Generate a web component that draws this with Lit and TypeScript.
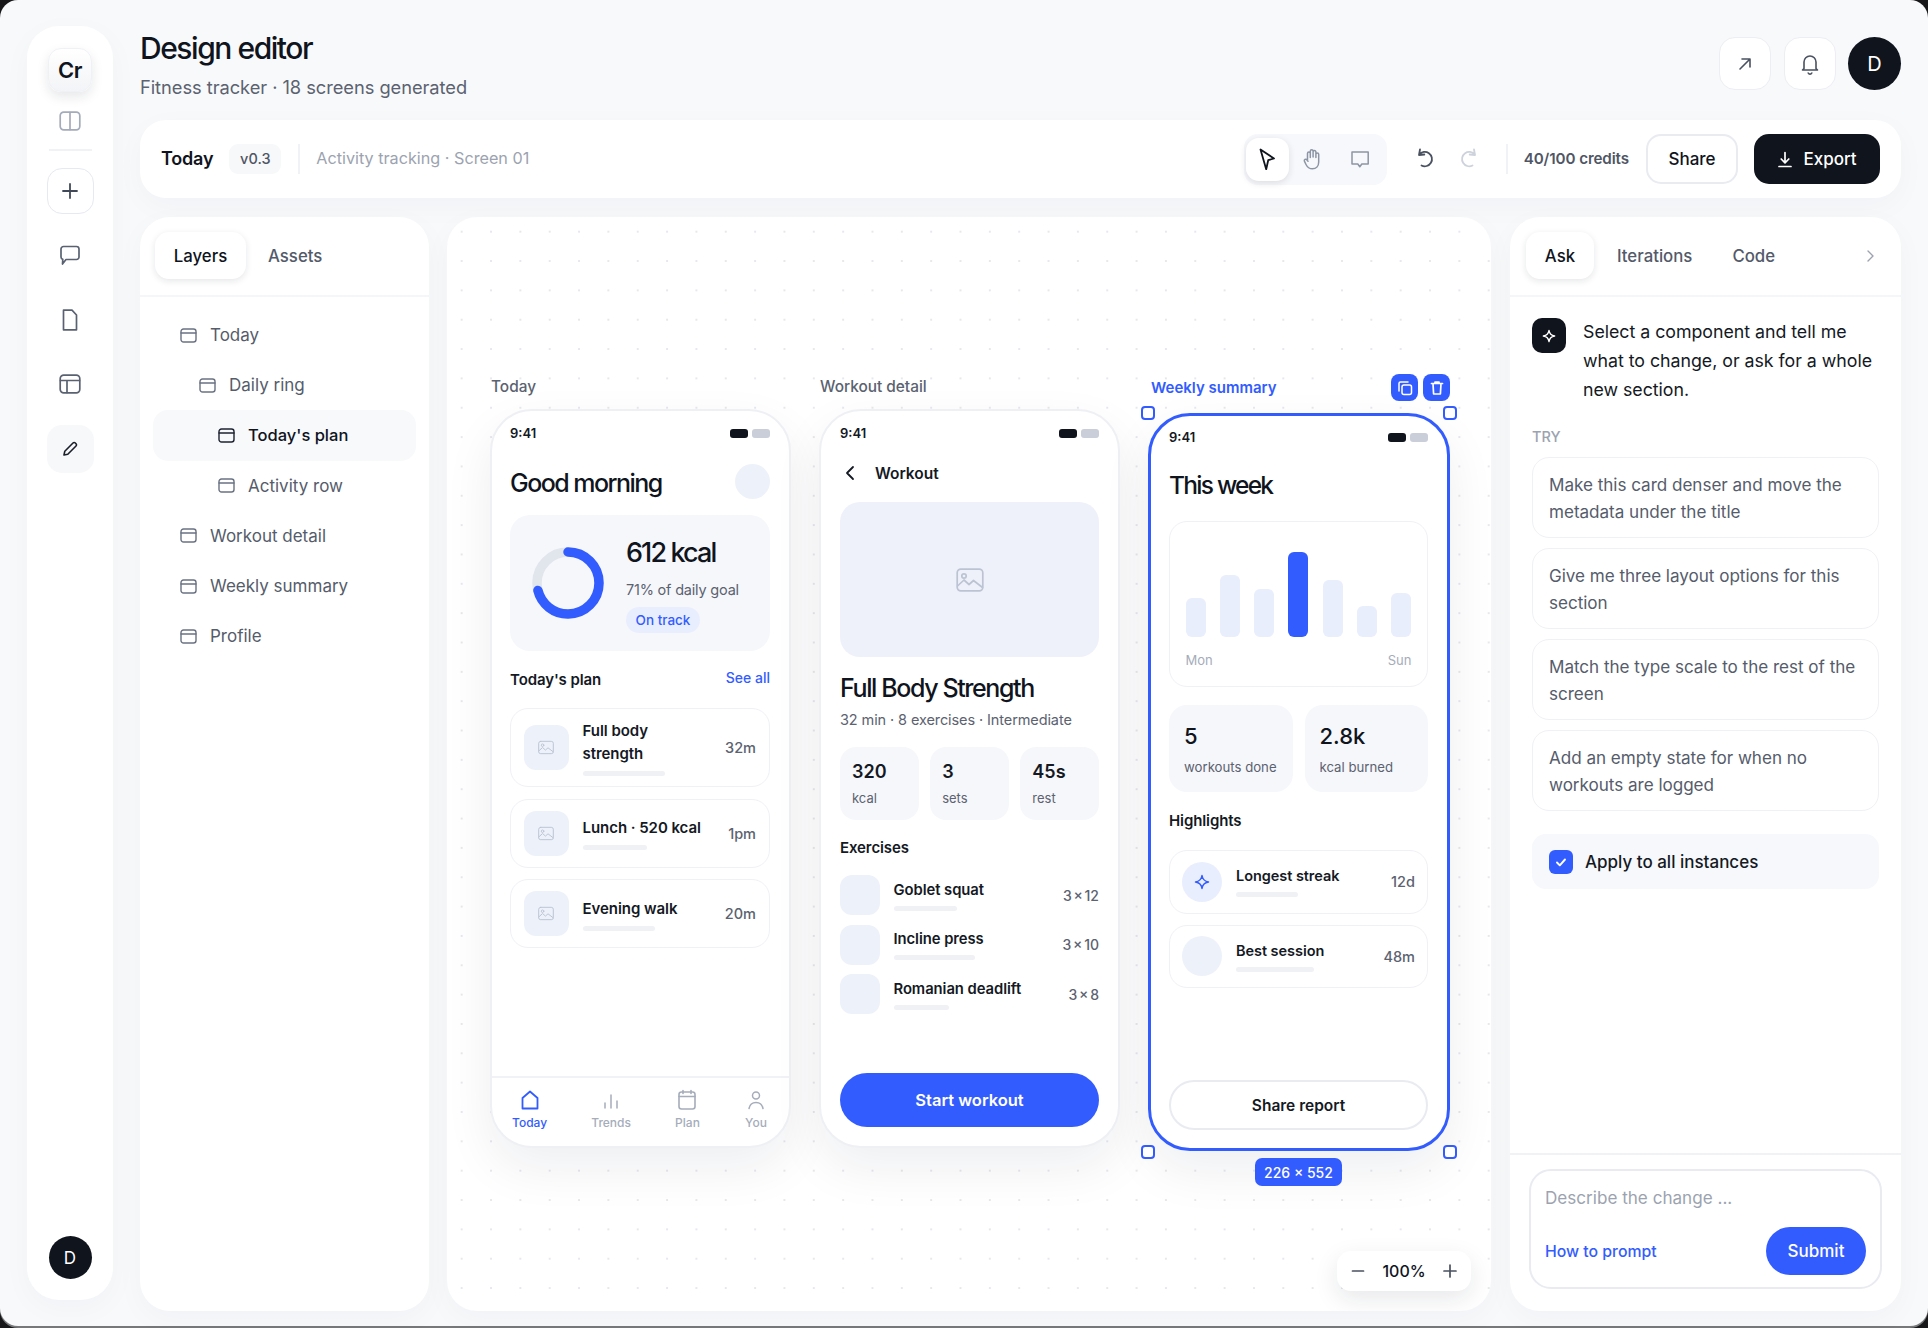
import { LitElement, html, css, svg } from "lit";
import { customElement } from "lit/decorators.js";

const I = (w: number, h: number, vb: string, body: unknown, cls = "") =>
  html`<svg class="ic ${cls}" width=${w} height=${h} viewBox=${vb} fill="none" stroke="currentColor" stroke-linecap="round" stroke-linejoin="round">${body}</svg>`;

const screenIcon = () =>
  I(17, 15, "0 0 17 15", svg`<rect x="1" y="1" width="15" height="13" rx="2.5" stroke-width="1.4"/><path d="M1 5h15" stroke-width="1.4"/>`);

const imgIcon = (w = 16, h = 16) =>
  I(w, h, "0 0 28 24", svg`<rect x="1.2" y="1.2" width="25.6" height="21.6" rx="3.5" stroke-width="1.7"/><circle cx="8" cy="8" r="2.2" stroke-width="1.7"/><path d="M1.5 18l6.5-6 5 4.5 4.5-4 9 7" stroke-width="1.7"/>`, "imgic");

const spark = (s: number) =>
  I(s, s, "0 0 16 16", svg`<path d="M8 1.5C8.6 5.6 10.4 7.4 14.5 8 10.4 8.6 8.6 10.4 8 14.5 7.4 10.4 5.6 8.6 1.5 8 5.6 7.4 7.4 5.6 8 1.5Z" stroke-width="1.5"/>`);

const status = () => html`<div class="status"><span class="time">9:41</span><span class="pills"><i class="p1"></i><i class="p2"></i></span></div>`;

const planRows = [
  { t: "Full body strength", v: "32m", bar: 82, cls: "two" },
  { t: "Lunch · 520 kcal", v: "1pm", bar: 64, cls: "" },
  { t: "Evening walk", v: "20m", bar: 72, cls: "" },
];
const exercises = [
  { t: "Goblet squat", v: "3 × 12", bar: 63 },
  { t: "Incline press", v: "3 × 10", bar: 81 },
  { t: "Romanian deadlift", v: "3 × 8", bar: 55 },
];
const weekBars = [39, 62, 48, 85, 57, 31, 44];
const suggestions = [
  "Make this card denser and move the metadata under the title",
  "Give me three layout options for this section",
  "Match the type scale to the rest of the screen",
  "Add an empty state for when no workouts are logged",
];
const layers = [
  { t: "Today", l: 0 },
  { t: "Daily ring", l: 1 },
  { t: "Today's plan", l: 2, sel: true },
  { t: "Activity row", l: 2 },
  { t: "Workout detail", l: 0 },
  { t: "Weekly summary", l: 0 },
  { t: "Profile", l: 0 },
];

@customElement("app-root")
export class AppRoot extends LitElement {
  static styles = css`
    :host { display: block; width: 1928px; height: 1328px; background: #17171a; overflow: hidden;
      font-family: Inter, "Liberation Sans", sans-serif; color: #0f141d; }
    * { box-sizing: border-box; }
    .ic { display: block; flex: none; }
    .frame { height: 1326px; border-radius: 18px; background: #f8f9fb; box-shadow: 0 2px 0 #77787a;
      display: flex; padding: 26px 27px 15px; gap: 27px; }

    .rail { width: 86px; height: 1274px; flex: none; background: #fff; border-radius: 32px; display: flex; flex-direction: column;
      align-items: center; padding: 22px 0 21px; box-shadow: 0 8px 30px rgba(20,30,50,.03); }
    .logo { width: 44px; height: 44px; border-radius: 13px; display: flex; align-items: center; justify-content: center;
      font-size: 22px; font-weight: 600; letter-spacing: -.5px; background: linear-gradient(#fff, #f3f4f7); border: 1px solid #f0f1f5;
      box-shadow: 0 5px 12px rgba(20,30,50,.1); }
    .panelic { margin-top: 19px; color: #a4abb9; }
    .rdiv { width: 43px; height: 2px; background: #f1f2f6; margin: 18px 0 17px; }
    .rstack { display: flex; flex-direction: column; gap: 18.3px; }
    .rbtn { width: 47px; height: 46px; border-radius: 15px; display: flex; align-items: center; justify-content: center; color: #5a6272; }
    .rbtn.bd { border: 1.5px solid #e7e9f0; color: #414958; }
    .rbtn.on { background: #f7f8fa; height: 48px; color: #1a1f29; }
    .ravatar { margin-top: auto; width: 43px; height: 43px; border-radius: 50%; background: #0f141d; color: #fff; display: flex;
      align-items: center; justify-content: center; font-size: 17px; }

    .main { flex: 1; min-width: 0; display: flex; flex-direction: column; }
    .head { height: 94px; flex: none; display: flex; justify-content: space-between; align-items: flex-start; }
    h1 { margin: 4px 0 0; font-size: 30px; line-height: 36px; font-weight: 500; letter-spacing: -1.45px; }
    .sub { margin-top: 9px; font-size: 18.3px; line-height: 24px; color: #5b6270; letter-spacing: -.05px; }
    .headbtns { display: flex; gap: 12.5px; padding-top: 11px; }
    .hb { width: 52px; height: 53px; border-radius: 16px; background: #fff; border: 1.5px solid #eceef3; display: flex; align-items: center; justify-content: center; color: #4a5160; }
    .hb.av { width: 53px; background: #0f141d; border: 0; border-radius: 50%; color: #fff; font-size: 20px; }

    .toolbar { height: 78px; flex: none; background: #fff; border-radius: 26px; display: flex; align-items: center; padding: 0 21px; box-shadow: 0 8px 30px rgba(20,30,50,.03); }
    .tb-title { font-size: 18px; font-weight: 600; letter-spacing: -.2px; margin-top: -1px; }
    .ver { margin-left: 16px; margin-top: -1px; width: 52px; height: 30px; border-radius: 9px; background: #f7f8fa; color: #4f5665; font-size: 14.5px; font-weight: 500; display: flex; align-items: center; justify-content: center; }
    .vdiv { width: 2px; height: 30px; background: #f1f2f6; }
    .vdiv.d1 { margin-left: 17px; }
    .crumb { margin-left: 16px; margin-top: -3px; color: #9ca3b0; font-size: 16.2px; }
    .tools { margin-left: auto; width: 143px; height: 51px; background: #f7f8fb; border-radius: 14px; display: flex; align-items: center; padding-left: 2px; color: #8d95a5; }
    .tool { width: 43px; height: 43px; border-radius: 13px; display: flex; align-items: center; justify-content: center; color: #8d95a5; }
    .tool.on { background: #fff; box-shadow: 0 2px 7px rgba(20,30,50,.12); color: #0f141d; }
    .tool.h { margin-left: 2px; } .tool.c { margin-left: 5px; }
    .undo { margin-left: 28px; margin-top: -3px; color: #4a5160; } .redo { margin-left: 26px; margin-top: -3px; color: #cdd2dc; }
    .tb-d2 { margin-left: 27px; }
    .credits { margin-left: 16px; font-size: 15.2px; font-weight: 600; color: #4f5665; letter-spacing: -.1px; white-space: nowrap; margin-top: -1px; }
    .share { margin-left: 17px; width: 92px; height: 50px; border-radius: 15px; border: 2px solid #e9ebf1; background: #fff; display: flex; align-items: center; justify-content: center; font-size: 17px; font-weight: 500; }
    .export { margin-left: 16px; width: 126px; height: 50px; border-radius: 15px; background: #0f141d; color: #fff; display: flex; align-items: center; justify-content: center; gap: 10px; font-size: 17px; font-weight: 500; }

    .panels { flex: 1; min-height: 0; margin-top: 19px; display: flex; }
    .panel { background: #fff; border-radius: 30px; display: flex; flex-direction: column; box-shadow: 0 8px 30px rgba(20,30,50,.03); }
    .layers { width: 289px; flex: none; }
    .tabs { height: 80px; flex: none; border-bottom: 2.5px solid #f5f6f9; display: flex; align-items: flex-start; padding: 15px 16px 0 15px; font-size: 16.8px; font-weight: 500; color: #535a69; }
    .chip { height: 47px; border-radius: 14px; background: #fff; box-shadow: 0 2px 7px rgba(20,30,50,.11); display: flex; align-items: center; justify-content: center; color: #0f141d; }
    .chip.w1 { width: 91px; } .chip.w2 { width: 68px; }
    .tab { height: 47px; display: flex; align-items: center; }
    .tab.m1 { margin-left: 22px; } .tab.m2 { margin-left: 23px; } .tab.m3 { margin-left: 40px; }
    .tree { padding: 13px 13px 0; }
    .node { height: 50.2px; border-radius: 15px; display: flex; align-items: center; gap: 13px; font-size: 17px; color: #555c6b; }
    .node .ic { color: #6a7282; }
    .node.sel { background: #f8f9fb; color: #0f141d; font-weight: 500; font-size: 16.5px; }
    .node.sel .ic { color: #1d2330; }

    .canvas { flex-direction: row; width: 1044px; flex: none; margin: 0 19px 0 18px; position: relative; overflow: hidden; gap: 28px; padding: 160px 0 0 43px;
      background-color: #fff; background-image: radial-gradient(circle at center, #e6e8ed 1px, transparent 1.4px); background-size: 29.35px 29.35px; }
    .col { width: 301px; flex: none; }
    .col.c3 { width: 302px; margin-top: -3px; }
    .label { height: 20px; line-height: 20px; margin: 0 0 12px 1px; font-size: 15.4px; font-weight: 500; color: #5b6270; }
    .selhead { height: 27px; margin-bottom: 12px; display: flex; align-items: center; padding-left: 3px; font-size: 15px; font-weight: 600; color: #335cff; }
    .sb { width: 27px; height: 27px; border-radius: 8px; background: #335cff; color: #fff; display: flex; align-items: center; justify-content: center; }
    .sb.a { margin-left: auto; margin-right: 5px; }

    .phone { height: 739px; border: 2px solid #eff0f4; border-radius: 42px; background: #fff; display: flex; flex-direction: column; box-shadow: 0 20px 50px rgba(20,30,50,.07); position: relative; }
    .phone.sel { height: 738px; border: 3px solid #335cff; }
    .pbody { flex: 1; min-height: 0; display: flex; flex-direction: column; padding: 13px 19px 18px 18px; }
    .pw .pbody { padding-left: 19px; padding-bottom: 19px; }
    .sel .pbody { padding-top: 12px; }
    .status { height: 18px; flex: none; display: flex; align-items: center; justify-content: space-between; }
    .time { font-size: 13px; font-weight: 600; color: #141924; }
    .pills { display: flex; gap: 4px; }
    .pills i { width: 18px; height: 9px; border-radius: 3px; }
    .p1 { background: #0f141d; } .p2 { background: #c9ced9; }
    .big { font-size: 25px; line-height: 34px; font-weight: 500; letter-spacing: -1.55px; white-space: nowrap; }
    .greet { margin-top: 22px; height: 34px; display: flex; justify-content: space-between; align-items: center; }
    .greet .big { margin-top: 3px; }
    .gav { width: 35px; height: 35px; border-radius: 50%; background: #edf1f9; }
    .ring { margin-top: 17px; height: 136px; flex: none; border-radius: 20px; background: #f6f7fb; display: flex; align-items: center; padding-left: 22px; gap: 22px; }
    .kcal { font-size: 27px; line-height: 34px; font-weight: 500; letter-spacing: -1.9px; margin-top: 2px; }
    .goal { margin-top: 10px; font-size: 14.5px; line-height: 20px; color: #5b6270; letter-spacing: -.2px; }
    .track { margin-top: 7px; width: 74px; height: 26px; border-radius: 13px; background: #e9eeff; color: #335cff; font-size: 13.5px; font-weight: 500; display: flex; align-items: center; justify-content: center; }
    .sec { font-size: 15px; line-height: 20px; font-weight: 600; letter-spacing: -.1px; color: #141924; }
    .planhead { margin-top: 19px; display: flex; justify-content: space-between; }
    .seeall { margin-top: -1px; font-size: 14px; font-weight: 500; color: #335cff; }
    .plans { margin-top: 18px; display: flex; flex-direction: column; gap: 11.5px; }
    .row { display: flex; align-items: center; border: 1.5px solid #f0f1f5; border-radius: 18px; background: #fff; height: 69px; padding: 0 13px 0 12.5px; }
    .row.two { height: 79px; }
    .thumb { width: 45px; height: 45px; flex: none; border-radius: 12px; background: #edf1f9; display: flex; align-items: center; justify-content: center; color: #bcc4d4; }
    .rowtext { margin-left: 14px; flex: 1; min-width: 0; }
    .rt { font-size: 15px; line-height: 23px; font-weight: 600; color: #141924; letter-spacing: -.05px; }
    .two .rt { width: 110px; }
    .rbar { margin-top: 6px; height: 5px; border-radius: 3px; background: #f0f1f5; }
    .rv { font-size: 14.5px; font-weight: 500; color: #5b6270; white-space: nowrap; margin-left: 6px; }
    .tabbar { height: 70px; flex: none; border-top: 2px solid #f1f2f6; display: flex; justify-content: space-between; padding: 10px 21px 0 20px; }
    .tbi { display: flex; flex-direction: column; align-items: center; color: #a5acba; font-size: 12px; font-weight: 500; line-height: 14px; gap: 4px; }
    .tbi.on { color: #335cff; }

    .back { margin-top: 19px; height: 24px; display: flex; align-items: center; gap: 20px; font-size: 15.5px; font-weight: 600; color: #141924; padding-left: 5px; }
    .hero { margin-top: 17px; height: 155px; flex: none; border-radius: 20px; background: #eef1f9; display: flex; align-items: center; justify-content: center; color: #bcc4d4; }
    .ptitle { margin-top: 15px; font-size: 25px; line-height: 32px; font-weight: 500; letter-spacing: -1.4px; white-space: nowrap; }
    .psub { margin-top: 6px; font-size: 14.5px; line-height: 20px; color: #5b6270; letter-spacing: -.1px; white-space: nowrap; }
    .stats { margin-top: 17px; display: flex; gap: 11.5px; }
    .stat { flex: 1; height: 73px; border-radius: 16px; background: #f6f7fb; padding: 13px 0 0 12px; }
    .sv { font-size: 18px; line-height: 24px; font-weight: 600; color: #141924; }
    .sl { margin-top: 6px; font-size: 13px; line-height: 16px; color: #5b6270; }
    .ex-h { margin-top: 18px; }
    .exs { margin-top: 17px; display: flex; flex-direction: column; gap: 9.5px; }
    .ex { height: 40px; display: flex; align-items: center; }
    .exth { width: 40px; height: 40px; border-radius: 12px; background: #edf1f9; flex: none; }
    .ex .rowtext { margin-left: 13.5px; }
    .ex .rt { font-size: 14.8px; line-height: 20px; }
    .ex .rv { font-size: 14px; color: #5b6270; word-spacing: -2px; }
    .cta { margin-top: auto; height: 54px; flex: none; border-radius: 27px; background: #335cff; color: #fff; font-size: 16.5px; font-weight: 600; display: flex; align-items: center; justify-content: center; }

    .big.wk { margin-top: 23px; font-size: 24.5px; line-height: 32px; letter-spacing: -1.75px; }
    .chart { margin-top: 20px; height: 166px; flex: none; border: 1.5px solid #f0f1f5; border-radius: 18px; padding: 29.5px 15.5px 0; }
    .bars { height: 85px; display: flex; justify-content: space-between; align-items: flex-end; }
    .bars i { width: 20px; border-radius: 6px; background: #e9eefd; }
    .bars i.hi { background: #335cff; }
    .days { margin-top: 15px; display: flex; justify-content: space-between; font-size: 13px; line-height: 16px; color: #a5acba; }
    .wstats { margin-top: 18px; display: flex; gap: 12px; }
    .wstat { flex: 1; height: 87px; border-radius: 18px; background: #f6f7fb; padding: 17px 0 0 15px; }
    .wv { font-size: 22px; line-height: 28px; font-weight: 500; }
    .wl { margin-top: 8px; font-size: 13.2px; line-height: 18px; color: #5b6270; }
    .hl { margin-top: 19px; }
    .hrows { margin-top: 19px; display: flex; flex-direction: column; gap: 11px; }
    .hrow { height: 63.5px; display: flex; align-items: center; border: 1.5px solid #f0f1f5; border-radius: 18px; padding: 0 12px 0 12px; }
    .hc { width: 40px; height: 40px; border-radius: 50%; background: #edf1f9; flex: none; display: flex; align-items: center; justify-content: center; color: #335cff; }
    .hc.blue { background: #e9eefe; }
    .hrow .rt { font-size: 14.5px; line-height: 20px; }
    .sharer { margin-top: auto; height: 50px; flex: none; border-radius: 25px; border: 2px solid #e9ebf1; display: flex; align-items: center; justify-content: center; font-size: 15.5px; font-weight: 600; color: #141924; }
    .hd { position: absolute; width: 14px; height: 14px; border: 2px solid #335cff; background: #fff; border-radius: 4px; }
    .tl { left: -10px; top: -10px; } .tr { right: -10px; top: -10px; }
    .bl { left: -10px; bottom: -11px; } .br { right: -10px; bottom: -11px; }
    .dim { position: absolute; left: 104px; bottom: -38px; width: 87px; height: 28px; border-radius: 7px; background: #335cff; color: #fff; font-size: 14px; font-weight: 500; display: flex; align-items: center; justify-content: center; }
    .zoom { position: absolute; right: 20px; bottom: 20px; width: 134px; height: 40px; border-radius: 14px; background: #fff; box-shadow: 0 8px 24px rgba(20,30,50,.1); display: flex; align-items: center; justify-content: space-between; padding: 0 14px; font-size: 16px; font-weight: 500; color: #4a5160; }
    .zoom span { color: #0f141d; }

    .ask { width: 391px; flex: none; }
    .ask .tabs { padding-left: 16px; }
    .ask .chev { margin-left: auto; height: 47px; display: flex; align-items: center; color: #9ca3b0; padding-right: 10px; }
    .askbody { padding: 21px 22.5px 0 22px; }
    .msg { display: flex; gap: 17px; }
    .ai { width: 34px; height: 35px; flex: none; border-radius: 10px; background: #0f141d; color: #fff; display: flex; align-items: center; justify-content: center; }
    .msgt { font-size: 17.8px; line-height: 29px; color: #141924; letter-spacing: -.03px; margin-top: -1px; margin-bottom: 1px; }
    .try { margin-top: 23px; font-size: 14.5px; line-height: 18px; font-weight: 500; color: #9ca3b0; }
    .sugs { margin-top: 11px; display: flex; flex-direction: column; gap: 10px; }
    .sug { height: 81px; border: 1.5px solid #f0f1f5; border-radius: 17px; padding: 0 15px 0 16px; display: flex; align-items: center; font-size: 17.1px; line-height: 27px; color: #555c6b; letter-spacing: -.03px; }
    .apply { margin-top: 23px; height: 55px; border-radius: 14px; background: #f7f8fb; display: flex; align-items: center; gap: 12px; padding-left: 17px; font-size: 17px; font-weight: 500; color: #141924; }
    .cb { width: 24px; height: 24px; border-radius: 6px; background: #335cff; color: #fff; display: flex; align-items: center; justify-content: center; }
    .foot { margin-top: auto; border-top: 2px solid #f1f2f6; padding: 14px 19px 22px; }
    .box { height: 120px; border: 2px solid #e9ebf1; border-radius: 22px; padding: 15px 14px 12px 14px; display: flex; flex-direction: column; justify-content: space-between; }
    .ph { font-size: 17.1px; line-height: 24px; color: #9ca3b0; }
    .fr { display: flex; justify-content: space-between; align-items: center; }
    .how { font-size: 15.8px; font-weight: 500; color: #335cff; }
    .submit { width: 100px; height: 48px; border-radius: 24px; background: #335cff; color: #fff; font-size: 17px; font-weight: 500; display: flex; align-items: center; justify-content: center; }
  `;

  rail() {
    return html`<nav class="rail">
      <div class="logo">Cr</div>
      <div class="panelic">${I(22, 20, "0 0 22 20", svg`<rect x="1.2" y="1.2" width="19.6" height="17.6" rx="3.5" stroke-width="1.7"/><path d="M11 1.5v17" stroke-width="1.7"/>`)}</div>
      <div class="rdiv"></div>
      <div class="rstack">
        <div class="rbtn bd">${I(18, 18, "0 0 18 18", svg`<path d="M9 2v14M2 9h14" stroke-width="1.8"/>`)}</div>
        <div class="rbtn">${I(22, 22, "0 0 22 22", svg`<path d="M4.5 2.5h13A2.5 2.5 0 0 1 20 5v8a2.5 2.5 0 0 1-2.5 2.5H7L3.5 20l.3-4.6A2.5 2.5 0 0 1 2 13V5a2.5 2.5 0 0 1 2.5-2.5Z" stroke-width="1.7"/>`)}</div>
        <div class="rbtn">${I(16, 22, "0 0 16 22", svg`<path d="M1.5 1.2H10l4.5 4.8v14.800H1.5V1.200Z" stroke-width="1.7"/>`)}</div>
        <div class="rbtn">${I(22, 20, "0 0 22 20", svg`<rect x="1.2" y="1.2" width="19.6" height="17.6" rx="3.5" stroke-width="1.7"/><path d="M1.5 6.5h19M8 6.5v12" stroke-width="1.7"/>`)}</div>
        <div class="rbtn on">${I(18, 18, "0 0 18 18", svg`<path d="M3 15l.8-3.8L12 3a1.6 1.6 0 0 1 2.3 0l.7.7A1.6 1.6 0 0 1 15 6l-8.2 8.2L3 15Z" stroke-width="1.6"/>`)}</div>
      </div>
      <div class="ravatar">D</div>
    </nav>`;
  }

  toolbar() {
    return html`<div class="toolbar">
      <span class="tb-title">Today</span>
      <span class="ver">v0.3</span>
      <span class="vdiv d1"></span>
      <span class="crumb">Activity tracking · Screen 01</span>
      <div class="tools">
        <div class="tool on">${I(18, 25, "0 0 18 25", svg`<path d="M2.5 2.500L16 11.500l-5.800 1.700-2 9L2.500 2.500Z" stroke-width="1.8"/>`)}</div>
        <div class="tool h">${I(20, 24, "0 0 20 24", svg`<path d="M5.5 12.5V6.5a1.4 1.4 0 0 1 2.8 0v4M8.3 10V4.2a1.4 1.4 0 0 1 2.8 0V10M11.1 10V5a1.4 1.4 0 0 1 2.8 0v5.5M13.9 10.5V7.3a1.4 1.4 0 0 1 2.8 0V15c0 4-2.6 6.8-6.3 6.8-3.2 0-5-1.5-6.4-4.3l-1.6-3.3a1.4 1.4 0 0 1 2.4-1.4l1.2 1.5" stroke-width="1.5"/>`)}</div>
        <div class="tool c">${I(20, 20, "0 0 20 20", svg`<path d="M2 3h16.200v12h-6.400l-2 2.800-2-2.800H2V3Z" stroke-width="1.5"/>`)}</div>
      </div>
      <div class="undo">${I(19, 21, "0 0 19 21", svg`<path d="M5 2.500 4 8l5.300-.5M4.200 7.500A7.200 7.200 0 1 1 6.500 18.500" stroke-width="1.8"/>`)}</div>
      <div class="redo">${I(19, 21, "0 0 19 21", svg`<path d="M14 2.500 15 8l-5.300-.5M14.800 7.500A7.200 7.200 0 1 0 12.500 18.500" stroke-width="1.8"/>`)}</div>
      <span class="vdiv tb-d2"></span>
      <span class="credits">40/100 credits</span>
      <div class="share">Share</div>
      <div class="export">${I(16, 17, "0 0 16 17", svg`<path d="M8 1.500v10M4.200 8 8 11.800 11.800 8M2 15.500h12" stroke-width="1.7"/>`)}Export</div>
    </div>`;
  }

  layers() {
    return html`<aside class="panel layers">
      <div class="tabs"><div class="chip w1">Layers</div><div class="tab m1">Assets</div></div>
      <div class="tree">
        ${layers.map((n) => html`<div class="node ${n.sel ? "sel" : ""}" style="padding-left:${27 + n.l * 19}px">${screenIcon()}<span>${n.t}</span></div>`)}
      </div>
    </aside>`;
  }

  phoneToday() {
    const c = 2 * Math.PI * 31;
    return html`<div class="col">
      <div class="label">Today</div>
      <div class="phone">
        <div class="pbody">
          ${status()}
          <div class="greet"><span class="big">Good morning</span><span class="gav"></span></div>
          <div class="ring">
            <svg width="72" height="72" viewBox="0 0 72 72" class="ic">
              <circle cx="36" cy="36" r="31" fill="none" stroke="#e1e5ec" stroke-width="9.5"></circle>
              <circle cx="36" cy="36" r="31" fill="none" stroke="#335cff" stroke-width="9.5" stroke-linecap="round"
                stroke-dasharray="${c * 0.71} ${c}" transform="rotate(-90 36 36)"></circle>
            </svg>
            <div>
              <div class="kcal">612 kcal</div>
              <div class="goal">71% of daily goal</div>
              <div class="track">On track</div>
            </div>
          </div>
          <div class="planhead"><span class="sec">Today's plan</span><span class="seeall">See all</span></div>
          <div class="plans">
            ${planRows.map((r) => html`<div class="row ${r.cls}">
              <div class="thumb">${imgIcon(16, 15)}</div>
              <div class="rowtext"><div class="rt">${r.t}</div><div class="rbar" style="width:${r.bar}px"></div></div>
              <span class="rv">${r.v}</span>
            </div>`)}
          </div>
        </div>
        <div class="tabbar">
          <div class="tbi on">${I(24, 24, "0 0 24 24", svg`<path d="M4.5 20.5V10L12 3.5 19.5 10v10.500h-15Z" stroke-width="1.8"/>`)}Today</div>
          <div class="tbi">${I(24, 24, "0 0 24 24", svg`<path d="M6 15v5M12 7v13M18 13v7" stroke-width="1.5"/>`)}Trends</div>
          <div class="tbi">${I(24, 24, "0 0 24 24", svg`<rect x="4" y="4" width="16" height="17" rx="2.5" stroke-width="1.6"/><path d="M4 8.5h16M8 2.5v3M16 2.5v3" stroke-width="1.6"/>`)}Plan</div>
          <div class="tbi">${I(24, 24, "0 0 24 24", svg`<circle cx="12" cy="7.5" r="3.5" stroke-width="1.5"/><path d="M5 20.5c.8-4 3.4-6 7-6s6.200 2 7 6" stroke-width="1.5"/>`)}You</div>
        </div>
      </div>
    </div>`;
  }

  phoneWorkout() {
    return html`<div class="col">
      <div class="label">Workout detail</div>
      <div class="phone pw">
        <div class="pbody">
          ${status()}
          <div class="back">${I(10, 16, "0 0 10 16", svg`<path d="M8 2 2 8l6 6" stroke-width="1.8"/>`)}<span>Workout</span></div>
          <div class="hero">${imgIcon(28, 24)}</div>
          <div class="ptitle">Full Body Strength</div>
          <div class="psub">32 min · 8 exercises · Intermediate</div>
          <div class="stats">
            <div class="stat"><div class="sv">320</div><div class="sl">kcal</div></div>
            <div class="stat"><div class="sv">3</div><div class="sl">sets</div></div>
            <div class="stat"><div class="sv">45s</div><div class="sl">rest</div></div>
          </div>
          <div class="sec ex-h">Exercises</div>
          <div class="exs">
            ${exercises.map((e) => html`<div class="ex"><div class="exth"></div>
              <div class="rowtext"><div class="rt">${e.t}</div><div class="rbar" style="width:${e.bar}px"></div></div>
              <span class="rv">${e.v}</span></div>`)}
          </div>
          <div class="cta">Start workout</div>
        </div>
      </div>
    </div>`;
  }

  phoneWeek() {
    return html`<div class="col c3">
      <div class="selhead"><span>Weekly summary</span>
        <div class="sb a">${I(16, 16, "0 0 16 16", svg`<rect x="5" y="5" width="9.5" height="9.5" rx="2" stroke-width="1.5"/><path d="M11 2H3.500A1.500 1.500 0 0 0 2 3.500V11" stroke-width="1.5"/>`)}</div>
        <div class="sb">${I(14, 16, "0 0 14 16", svg`<path d="M1.5 3.500h11M5 3.500V2h4v1.500M3 3.500l.6 10.500h6.800l.6-10.500" stroke-width="1.7"/>`)}</div>
      </div>
      <div class="phone sel">
        <div class="pbody">
          ${status()}
          <div class="big wk">This week</div>
          <div class="chart">
            <div class="bars">${weekBars.map((h, i) => html`<i class="${i === 3 ? "hi" : ""}" style="height:${h}px"></i>`)}</div>
            <div class="days"><span>Mon</span><span>Sun</span></div>
          </div>
          <div class="wstats">
            <div class="wstat"><div class="wv">5</div><div class="wl">workouts done</div></div>
            <div class="wstat"><div class="wv">2.8k</div><div class="wl">kcal burned</div></div>
          </div>
          <div class="sec hl">Highlights</div>
          <div class="hrows">
            <div class="hrow"><div class="hc blue">${spark(16)}</div><div class="rowtext"><div class="rt">Longest streak</div><div class="rbar" style="width:62px"></div></div><span class="rv">12d</span></div>
            <div class="hrow"><div class="hc"></div><div class="rowtext"><div class="rt">Best session</div><div class="rbar" style="width:78px"></div></div><span class="rv">48m</span></div>
          </div>
          <div class="sharer">Share report</div>
        </div>
        <i class="hd tl"></i><i class="hd tr"></i><i class="hd bl"></i><i class="hd br"></i>
        <div class="dim">226 × 552</div>
      </div>
    </div>`;
  }

  ask() {
    return html`<aside class="panel ask">
      <div class="tabs"><div class="chip w2">Ask</div><div class="tab m2">Iterations</div><div class="tab m3">Code</div>
        <div class="chev">${I(9, 14, "0 0 9 14", svg`<path d="M2 2l5 5-5 5" stroke-width="1.4"/>`)}</div></div>
      <div class="askbody">
        <div class="msg"><div class="ai">${spark(14)}</div><div class="msgt">Select a component and tell me what to change, or ask for a whole new section.</div></div>
        <div class="try">TRY</div>
        <div class="sugs">${suggestions.map((s) => html`<div class="sug"><span>${s}</span></div>`)}</div>
        <div class="apply"><span class="cb">${I(14, 14, "0 0 14 14", svg`<path d="M3 7.500l2.800 2.800L11 4.500" stroke-width="1.9"/>`)}</span>Apply to all instances</div>
      </div>
      <div class="foot">
        <div class="box">
          <div class="ph">Describe the change ...</div>
          <div class="fr"><span class="how">How to prompt</span><span class="submit">Submit</span></div>
        </div>
      </div>
    </aside>`;
  }

  render() {
    return html`<div class="frame">
      ${this.rail()}
      <div class="main">
        <header class="head">
          <div><h1>Design editor</h1><div class="sub">Fitness tracker · 18 screens generated</div></div>
          <div class="headbtns">
            <div class="hb">${I(16, 16, "0 0 16 16", svg`<path d="M3 13 13 3M5 3h8v8" stroke-width="1.6"/>`)}</div>
            <div class="hb">${I(20, 22, "0 0 20 22", svg`<path d="M4 15.500V9a6 6 0 0 1 12 0v6.500l1.500 1.500h-15L4 15.500ZM8.200 20a2 2 0 0 0 3.600 0" stroke-width="1.6"/>`)}</div>
            <div class="hb av">D</div>
          </div>
        </header>
        ${this.toolbar()}
        <div class="panels">
          ${this.layers()}
          <section class="panel canvas">
            ${this.phoneToday()}${this.phoneWorkout()}${this.phoneWeek()}
            <div class="zoom">${I(14, 14, "0 0 14 14", svg`<path d="M1.5 7h11" stroke-width="1.7"/>`)}<span>100%</span>${I(14, 14, "0 0 14 14", svg`<path d="M7 1v12M1 7h12" stroke-width="1.7"/>`)}</div>
          </section>
          ${this.ask()}
        </div>
      </div>
    </div>`;
  }
}
